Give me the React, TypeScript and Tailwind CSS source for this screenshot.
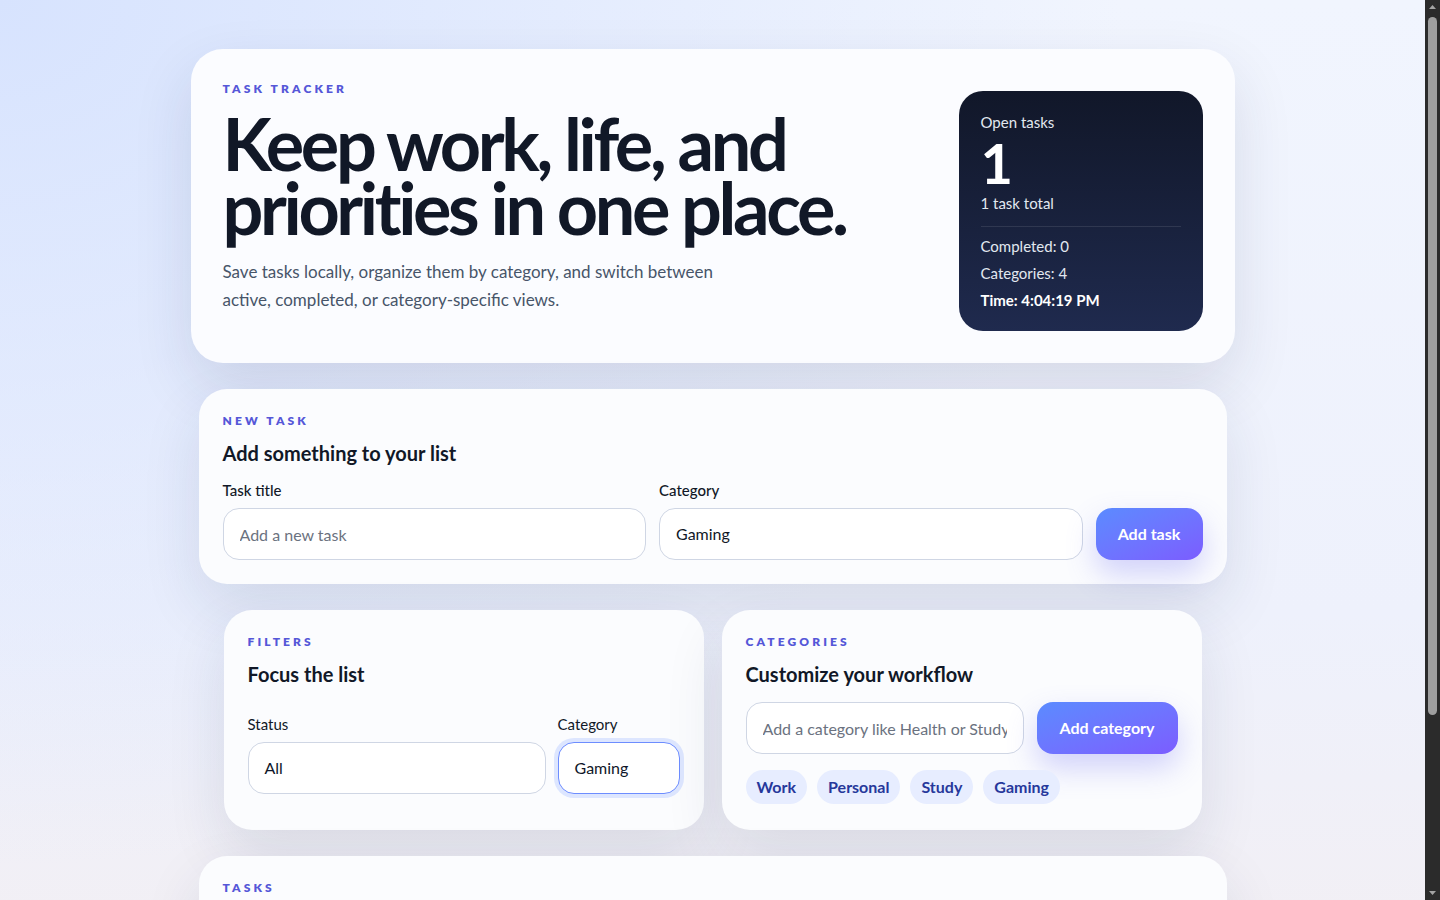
import { useState } from "react";

const categories = ["Work", "Personal", "Study", "Gaming"];

function Eyebrow({ children }: { children: string }) {
  return (
    <p className="text-[12px] leading-4 font-extrabold uppercase tracking-[0.26em] text-[#5557d8]">
      {children}
    </p>
  );
}

function Card({ children, className = "" }: { children: React.ReactNode; className?: string }) {
  return (
    <section
      className={
        "rounded-[28px] bg-[#fbfcfe] px-6 pt-6 shadow-[0_24px_60px_rgba(30,41,80,0.11)] " + className
      }
    >
      {children}
    </section>
  );
}

// window-style scrollbar on the right edge
function ScrollRail() {
  return (
    <div className="fixed top-0 right-0 bottom-0 w-[15px] bg-[#2b2b2b]">
      <svg className="absolute top-[4px] left-[3px]" width="9" height="6" viewBox="0 0 9 6">
        <path d="M4.5 1 L8 5 L1 5 Z" fill="#a3a3a3" />
      </svg>
      <div className="absolute top-[17px] left-[3px] h-[698px] w-[9px] rounded-full bg-[#9f9f9f]" />
      <svg className="absolute bottom-[4px] left-[3px]" width="9" height="6" viewBox="0 0 9 6">
        <path d="M1 1 L8 1 L4.5 5 Z" fill="#a3a3a3" />
      </svg>
    </div>
  );
}

export default function App() {
  const [title, setTitle] = useState("");
  const [newCategory, setNewCategory] = useState("");

  return (
    <div className="min-h-screen bg-[radial-gradient(ellipse_at_top_left,#d7e3fe_0%,rgba(237,241,253,0)_55%),linear-gradient(180deg,#f1f5fe_0%,#eef1fc_55%,#f4eef0_100%)] pr-[15px] font-['Segoe_UI','Lato',sans-serif] text-[#0f172a]">
      <main className="mx-auto flex w-[1028px] flex-col gap-[26px] pt-[49px] pb-12">
        {/* hero */}
        <section className="-mx-2 flex items-end justify-between rounded-[32px] bg-[#fbfcff] p-8 shadow-[0_24px_60px_rgba(30,41,80,0.12)]">
          <div className="pb-[17px]">
            <Eyebrow>Task Tracker</Eyebrow>
            <h1 className="mt-[14px] text-[72px] leading-[64px] font-bold tracking-[-0.047em] text-[#111827]">
              Keep work, life, and
              <br />
              priorities in one place.
            </h1>
            <p className="mt-[19px] max-w-[510px] text-[17px] leading-7 text-[#475569]">
              Save tasks locally, organize them by category, and switch between active, completed, or
              category-specific views.
            </p>
          </div>

          <div className="h-[240px] w-[244px] rounded-[24px] bg-linear-to-b from-[#111729] to-[#1f2a4e] px-[22px] pt-[20px] text-[15px] text-[#e2e8f0]">
            <p className="leading-[22px]">Open tasks</p>
            <p className="mt-[2px] text-[56px] leading-none font-bold text-white">1</p>
            <p className="mt-[1px] leading-[22px]">1 task total</p>
            <div className="mt-[12px] border-t border-white/10 pt-[6px] leading-[27px]">
              <p>Completed: 0</p>
              <p>Categories: 4</p>
              <p className="font-bold text-white">Time: 4:04:19 PM</p>
            </div>
          </div>
        </section>

        {/* new task */}
        <Card className="pb-6">
          <Eyebrow>New Task</Eyebrow>
          <h2 className="mt-[10px] text-[20px] leading-7 font-bold text-[#111827]">Add something to your list</h2>
          <div className="mt-[13px] grid grid-cols-[1fr_1fr_auto] items-end gap-[13px]">
            <label className="flex flex-col gap-2">
              <span className="text-[15px] leading-5 font-medium text-[#111827]">Task title</span>
              <input
                value={title}
                onChange={(e) => setTitle(e.target.value)}
                placeholder="Add a new task"
                className="h-[52px] rounded-2xl border border-[#cfd6e4] bg-white px-4 text-[16px] text-[#111827] outline-none placeholder:text-[#6b7280]"
              />
            </label>
            <label className="flex flex-col gap-2">
              <span className="text-[15px] leading-5 font-medium text-[#111827]">Category</span>
              <div className="flex h-[52px] items-center rounded-2xl border border-[#cfd6e4] bg-white px-4 text-[16px] text-[#111827]">
                Gaming
              </div>
            </label>
            <button className="h-[52px] w-[107px] rounded-2xl bg-linear-to-br from-[#5a8bff] to-[#7b5cff] text-[16px] font-bold text-white shadow-[0_14px_30px_rgba(99,102,241,0.28)]">
              Add task
            </button>
          </div>
        </Card>

        {/* filters + categories */}
        <div className="grid grid-cols-2 gap-[18px] px-[25px]">
          <Card className="pb-6">
            <Eyebrow>Filters</Eyebrow>
            <h2 className="mt-[10px] text-[20px] leading-7 font-bold text-[#111827]">Focus the list</h2>
            <div className="mt-[26px] grid grid-cols-[1fr_122px] gap-[12px]">
              <label className="flex flex-col gap-2">
                <span className="text-[15px] leading-5 text-[#111827]">Status</span>
                <div className="flex h-[52px] items-center rounded-2xl border border-[#cfd6e4] bg-white px-4 text-[16px]">
                  All
                </div>
              </label>
              <label className="flex flex-col gap-2">
                <span className="text-[15px] leading-5 text-[#111827]">Category</span>
                <div className="flex h-[52px] items-center rounded-2xl border border-[#6d8dff] bg-white px-4 text-[16px] ring-4 ring-[#dde6ff]">
                  Gaming
                </div>
              </label>
            </div>
          </Card>

          <Card className="pb-[26px]">
            <Eyebrow>Categories</Eyebrow>
            <h2 className="mt-[10px] text-[20px] leading-7 font-bold text-[#111827]">Customize your workflow</h2>
            <div className="mt-[14px] flex gap-[13px]">
              <input
                value={newCategory}
                onChange={(e) => setNewCategory(e.target.value)}
                placeholder="Add a category like Health or Study"
                className="h-[52px] min-w-0 flex-1 rounded-2xl border border-[#cfd6e4] bg-white px-4 text-[16px] outline-none placeholder:text-[#6b7280]"
              />
              <button className="h-[52px] w-[141px] rounded-2xl bg-linear-to-br from-[#5a8bff] to-[#7b5cff] text-[16px] font-bold text-white shadow-[0_14px_30px_rgba(99,102,241,0.28)]">
                Add category
              </button>
            </div>
            <div className="mt-[16px] flex flex-wrap gap-[10px]">
              {categories.map((c) => (
                <span
                  key={c}
                  className="flex h-[34px] items-center rounded-full bg-[#e7edff] px-[11px] text-[16px] font-bold text-[#26389b]"
                >
                  {c}
                </span>
              ))}
            </div>
          </Card>
        </div>

        {/* task list */}
        <Card className="pb-6">
          <Eyebrow>Tasks</Eyebrow>
          <h2 className="mt-[10px] text-[20px] leading-7 font-bold text-[#111827]">Your list</h2>
          <ul className="mt-4 flex flex-col gap-3">
            <li className="flex items-center justify-between rounded-2xl border border-[#e2e8f0] bg-white px-4 py-3">
              <div className="flex items-center gap-3">
                <span className="h-5 w-5 rounded-md border-2 border-[#cbd5e1]" />
                <span className="text-[16px] text-[#111827]">Finish the boss raid</span>
              </div>
              <span className="rounded-full bg-[#e7edff] px-3 py-1 text-[14px] font-bold text-[#26389b]">Gaming</span>
            </li>
          </ul>
          <p className="mt-4 text-[14px] text-[#64748b]">Showing 1 of 1 tasks</p>
        </Card>
      </main>
      <ScrollRail />
    </div>
  );
}
